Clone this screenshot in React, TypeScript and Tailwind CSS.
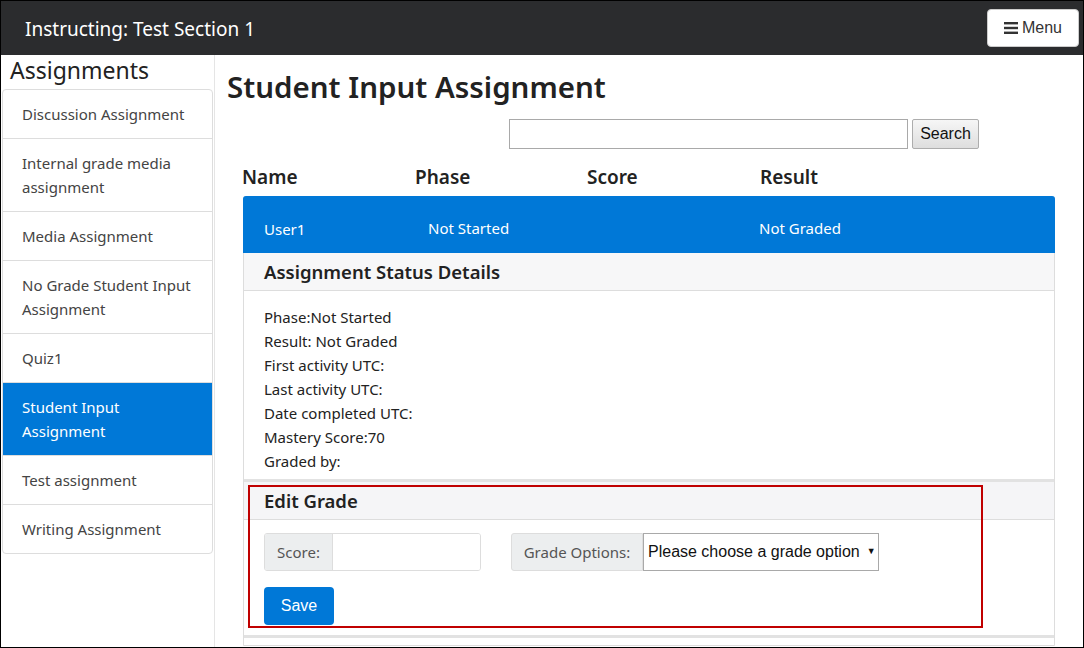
import React from "react";

const items: { label: string; active?: boolean }[] = [
  { label: "Discussion Assignment" },
  { label: "Internal grade media assignment" },
  { label: "Media Assignment" },
  { label: "No Grade Student Input Assignment" },
  { label: "Quiz1" },
  { label: "Student Input Assignment", active: true },
  { label: "Test assignment" },
  { label: "Writing Assignment" },
];

const details = [
  "Phase:Not Started",
  "Result: Not Graded",
  "First activity UTC:",
  "Last activity UTC:",
  "Date completed UTC:",
  "Mastery Score:70",
  "Graded by:",
];

export default function App() {
  return (
    <div
      className="w-[1084px] h-[648px] overflow-hidden border border-black bg-white flex flex-col text-[#333]"
      style={{ fontFamily: '"Noto Sans", "Open Sans", sans-serif' }}
    >
      {/* Navbar */}
      <div className="h-[54px] shrink-0 bg-[#2b2c2e] flex items-center justify-between pl-[24px] pr-[4px]">
        <div className="text-white text-[19px] pt-[3px]">Instructing: Test Section 1</div>
        <button
          className="h-[38px] w-[92px] bg-white rounded-[4px] border border-[#ccc] flex items-center justify-center gap-[4px] text-[16px] text-[#333]"
          style={{ fontFamily: '"Liberation Sans", Arial, sans-serif' }}
        >
          <svg width="14" height="12" viewBox="0 0 14 12">
            <rect x="0" y="0" width="14" height="2.4" fill="#333" />
            <rect x="0" y="4.8" width="14" height="2.4" fill="#333" />
            <rect x="0" y="9.6" width="14" height="2.4" fill="#333" />
          </svg>
          <span>Menu</span>
        </button>
      </div>

      <div className="flex flex-1 min-h-0">
        {/* Sidebar */}
        <div className="w-[214px] shrink-0 border-r border-[#e5e5e5] pl-[1px] pr-[1px]">
          <div className="text-[23px] leading-[30px] text-[#222] pl-[8px] pb-[4px]">Assignments</div>
          <div className="border border-[#ddd] rounded-[4px] overflow-hidden">
            {items.map((it, i) => (
              <div
                key={it.label}
                className={
                  "pl-[19px] pr-[12px] py-[12px] text-[15px] leading-[24px] " +
                  (i > 0 ? "border-t border-[#ddd] " : "") +
                  (it.active ? "bg-[#0078d7] text-white border-[#0078d7]" : "text-[#444]")
                }
              >
                {it.label}
              </div>
            ))}
          </div>
        </div>

        {/* Main */}
        <div className="flex-1 min-w-0 pl-[12px] pr-[28px] relative">
          <h1 className="text-[29.5px] font-semibold text-[#222] leading-[40px] mt-[12px]">Student Input Assignment</h1>
          <div className="flex items-center mt-[12px] ml-[282px] gap-[4px]">
            <input className="w-[399px] h-[30px] border border-[#a9a9a9] bg-white" />
            <button
              className="h-[30px] w-[67px] border border-[#adadad] rounded-[2px] bg-gradient-to-b from-[#f6f6f6] to-[#dedede] text-[16px] text-[#111]"
              style={{ fontFamily: '"Liberation Sans", Arial, sans-serif' }}
            >
              Search
            </button>
          </div>

          <div className="ml-[15px] mt-[15px]">
            <div className="flex text-[19px] font-semibold text-[#222] leading-[26px] pb-[6px]">
              <div className="w-[173px]">Name</div>
              <div className="w-[172px]">Phase</div>
              <div className="w-[173px]">Score</div>
              <div>Result</div>
            </div>
            <div className="ml-[1px] border border-[#ddd] rounded-t-[3px]">
              <div className="h-[57px] bg-[#0078d7] text-white text-[15px] flex items-center pl-[21px] pt-[10px] -m-px mb-0 rounded-t-[3px]">
                <div className="w-[164px]">User1</div>
                <div className="w-[331px] -mt-[2px]">Not Started</div>
                <div className="-mt-[2px]">Not Graded</div>
              </div>
              <div className="h-[38px] bg-[#f7f7f8] border-b border-[#ddd] flex items-center pl-[20px] text-[18.5px] font-semibold text-[#222]">
                Assignment Status Details
              </div>
              <div className="pl-[20px] pt-[14px] pb-[6px] text-[15px] leading-[24px] text-[#222]">
                {details.map((d) => (
                  <div key={d}>{d}</div>
                ))}
              </div>
              <div className="border-t-[3px] border-[#e2e2e2]">
                <div className="h-[38px] bg-[#f5f5f7] border-b border-[#ddd] flex items-center pl-[20px] text-[18.5px] font-semibold text-[#222]">
                  Edit Grade
                </div>
                <div className="pl-[20px] pt-[13px] pb-[10px]">
                  <div className="flex items-center">
                    <div className="flex h-[38px] w-[217px] border border-[#ddd] rounded-[3px] overflow-hidden">
                      <div className="w-[68px] bg-[#eceeef] border-r border-[#ddd] flex items-center justify-center text-[15px] text-[#555]">
                        Score:
                      </div>
                      <input className="flex-1 min-w-0 bg-white" />
                    </div>
                    <div className="flex h-[38px] ml-[30px]">
                      <div className="w-[132px] bg-[#eceeef] border border-[#ddd] rounded-l-[3px] flex items-center justify-center text-[15px] text-[#555]">
                        Grade Options:
                      </div>
                      <div
                        className="w-[236px] border border-[#a9a9a9] bg-white flex items-center pl-[4px] gap-[7px] text-[16px] text-[#111]"
                        style={{ fontFamily: '"Liberation Sans", Arial, sans-serif' }}
                      >
                        <span>Please choose a grade option</span>
                        <span className="text-[9px]">▼</span>
                      </div>
                    </div>
                  </div>
                  <button
                    className="mt-[16px] h-[38px] w-[70px] bg-[#0078d7] rounded-[4px] text-white text-[16px]"
                    style={{ fontFamily: '"Liberation Sans", Arial, sans-serif' }}
                  >
                    Save
                  </button>
                </div>
              </div>
              <div className="border-t-[3px] border-[#e2e2e2] h-[10px]"></div>
            </div>
          </div>

          {/* Red annotation box */}
          <div className="absolute left-[33px] top-[430px] w-[735px] h-[143px] border-2 border-[#c00000] pointer-events-none"></div>
        </div>
      </div>
    </div>
  );
}
